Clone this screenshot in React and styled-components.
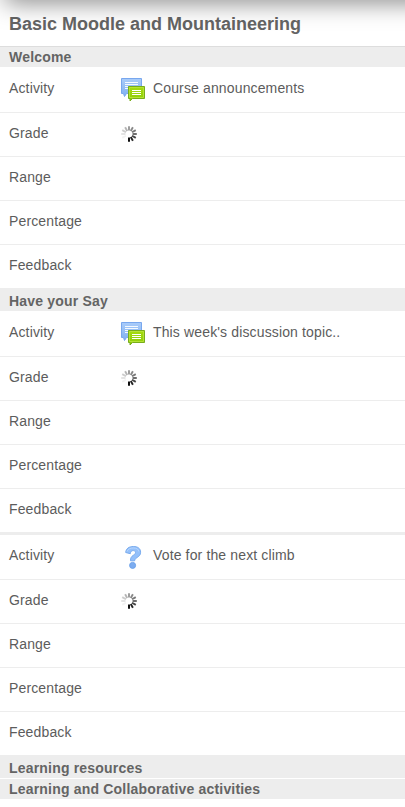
import React from "react"
import styled, { createGlobalStyle } from "styled-components"

const GlobalStyle = createGlobalStyle`
    body {
        margin: 0;
        background: #fff;
        color: #5c5c5c;
        font-family: "Liberation Sans", Arial, sans-serif;
        font-size: 14px;
    }
`
const Page = styled.main`
    position: relative;
    min-height: 807px;
    overflow: hidden;
`
const TopShadow = styled.div`
    position: absolute;
    top: -20px;
    left: 7px;
    right: -40px;
    height: 20px;
    box-shadow: 0 0 25px 2px rgba(0, 0, 0, 0.5);
`
const Title = styled.h1`
    box-sizing: border-box;
    height: 47px;
    margin: 0;
    padding-left: 9px;
    border-bottom: 1px solid #ddd;
    color: #646464;
    font-size: 18px;
    line-height: 48px;
    white-space: nowrap;
`
const SectionTitle = styled.h2`
    margin: 0;
    padding-left: 9px;
    border-top: ${props => props.$top};
    background: #ededed;
    color: #646464;
    font-size: 14px;
    line-height: 20px;
    letter-spacing: 0.19px;
    white-space: nowrap;
`
const Item = styled.dl`
    margin: 0;
    letter-spacing: 0.14px;
    border-top: ${props => props.$divided ? "3px solid #ededed" : "none"};
`
const Row = styled.div`
    display: grid;
    grid-template-columns: 112px 1fr;
    align-items: center;
    box-sizing: border-box;
    height: ${props => props.$height || 44}px;
    padding-left: 9px;
    border-bottom: 1px solid #ededed;
    &:last-child {
        height: 43px;
        border-bottom: none;
    }
`
const Label = styled.dt`
    line-height: 16px;
    padding-bottom: ${props => props.$lift || 3}px;
`
const Value = styled.dd`
    display: flex;
    align-items: center;
    margin: 0;
`
const ActivityName = styled.span`
    padding: 0 0 ${props => props.$lift || 3}px 8px;
    line-height: 16px;
    white-space: nowrap;
`
const Icon = styled.svg`
    display: block;
    flex: none;
`
const SpinnerIcon = styled(Icon)`
    margin-bottom: 2px;
`

function ForumIcon() {
    return (
        <Icon width="24" height="24" viewBox="0 0 24 24">
            <defs>
                <linearGradient id="forumBlue" x1="0" y1="0" x2="0" y2="1">
                    <stop offset="0" stopColor="#a9ccfa"/>
                    <stop offset="1" stopColor="#80b0f0"/>
                </linearGradient>
                <linearGradient id="forumGreen" x1="0" y1="0" x2="0" y2="1">
                    <stop offset="0" stopColor="#a6dc10"/>
                    <stop offset="1" stopColor="#8bcb08"/>
                </linearGradient>
            </defs>
            <path d="M.5.5h20v15H5.500L3.500 18.500 2.500 15.500H.5z" fill="url(#forumBlue)" stroke="#78a7ee"/>
            <path d="M4 4.500h13M4 6.500h13M4 8.500h3M4 10.500h3" stroke="#f4f9ff"/>
            <path d="M7.500 8.500h16v12h-12L9 23v-2.500H7.500z" fill="url(#forumGreen)" stroke="#78ad1b"/>
            <path d="M8.500 19.500v-10h14v10z" fill="none" stroke="#b4e235"/>
            <path d="M11 12.500h9M11 14.500h9M11 16.500h9" stroke="#fff"/>
        </Icon>
    )
}

function ChoiceIcon() {
    return (
        <Icon width="24" height="24" viewBox="0 0 24 24">
            <path d="M4.700 7.500C5 3.500 8 1.500 12.300 1.500c4.500 0 7.300 2 7.300 5.700 0 5.300-5.800 5-6 8.600H9.500c-.3-6 5-5.200 5-8.300 0-1.300-.9-1.900-2.200-1.900-1.700 0-2.800.9-3 3.100z" fill="#94c0fa" stroke="#7aacee" strokeLinejoin="round"/>
            <path d="M6 6.500C7 4 9 3 12.500 3c3.200 0 5 1.300 5.300 3.500" fill="none" stroke="#b5d5ff"/>
            <circle cx="11.600" cy="20.400" r="3" fill="#7cacf0" stroke="#6ea3ea"/>
        </Icon>
    )
}

// clockwise from one o'clock, darkest at the bottom
const spokes = ["#888", "#777", "#666", "#444", "#222", "#000", "#fff", "#f2f2f2", "#e2e2e2", "#ccc", "#b5b5b5", "#999"]

function Spinner() {
    return (
        <SpinnerIcon width="16" height="16" viewBox="-8 -8 16 16">
            {spokes.map((color, i) => (
                <path key={i} d="M0-3.500V-7.800" stroke={color} strokeWidth="1.900" transform={`rotate(${i * 30 + 30})`}/>
            ))}
        </SpinnerIcon>
    )
}

function GradeItem({name, icon, height, lift, divided}) {
    return (
        <Item $divided={divided}>
            <Row $height={height}>
                <Label $lift={lift}>Activity</Label>
                <Value>{icon}<ActivityName $lift={lift}>{name}</ActivityName></Value>
            </Row>
            <Row>
                <Label>Grade</Label>
                <Value><Spinner/></Value>
            </Row>
            <Row><Label>Range</Label></Row>
            <Row><Label>Percentage</Label></Row>
            <Row><Label>Feedback</Label></Row>
        </Item>
    )
}

export default function App() {
    return (
        <Page>
            <GlobalStyle/>
            <TopShadow/>
            <Title>Basic Moodle and Mountaineering</Title>
            <SectionTitle>Welcome</SectionTitle>
            <GradeItem name="Course announcements" icon={<ForumIcon/>} height={46}/>
            <SectionTitle $top="3px solid #ededed">Have your Say</SectionTitle>
            <GradeItem name="This week's discussion topic.." icon={<ForumIcon/>} height={46}/>
            <GradeItem name="Vote for the next climb" icon={<ChoiceIcon/>} height={45} lift={5} divided/>
            <SectionTitle $top="3px solid #ededed">Learning resources</SectionTitle>
            <SectionTitle $top="1px solid #fff">Learning and Collaborative activities</SectionTitle>
        </Page>
    )
}
